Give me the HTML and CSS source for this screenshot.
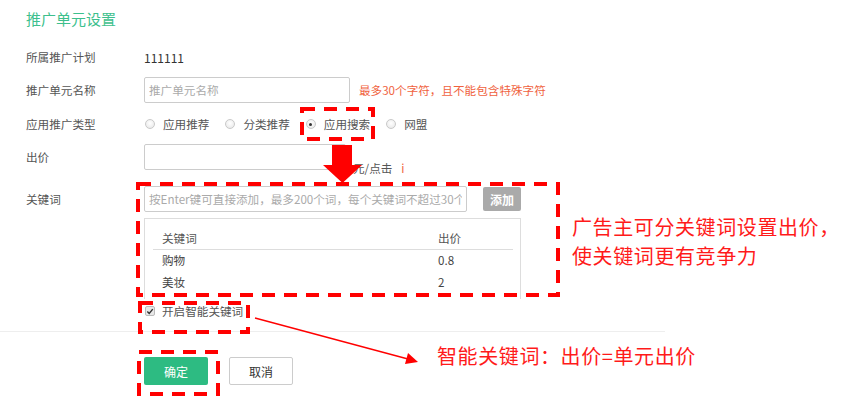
FILE: index.html
```html
<!DOCTYPE html>
<html lang="zh-CN">
<head>
    <meta charset="UTF-8">
    <meta name="viewport" content="width=device-width, initial-scale=1.0">
    <title>推广单元设置</title>

    <link rel="stylesheet" href="styles.css">
</head>
<body>

    <div class="page">
        <h2 class="title">推广单元设置</h2>

        <div class="form">
            <div class="row row-plan">
                <span class="label">所属推广计划</span>
                <span class="value">111111</span>
            </div>

            <div class="row row-name">
                <span class="label">推广单元名称</span>
                <div class="field">
                    <input type="text" class="input input-name" placeholder="推广单元名称">
                    <span class="hint">最多30个字符，且不能包含特殊字符</span>
                </div>
            </div>

            <div class="row row-type">
                <span class="label">应用推广类型</span>
                <div class="field radios">
                    <label class="radio-item"><span class="radio"></span>应用推荐</label>
                    <label class="radio-item"><span class="radio"></span>分类推荐</label>
                    <label class="radio-item"><span class="radio checked"></span>应用搜索</label>
                    <label class="radio-item"><span class="radio"></span>网盟</label>
                </div>
            </div>

            <div class="row row-price">
                <span class="label">出价</span>
                <div class="field price-field">
                    <input type="text" class="input input-price">
                    <span class="unit">元/点击</span>
                    <span class="info">i</span>
                </div>
            </div>

            <div class="row row-keyword">
                <span class="label">关键词</span>
                <div class="keyword-col">
                    <div class="keyword-add">
                        <input type="text" class="input input-keyword" placeholder="按Enter键可直接添加，最多200个词，每个关键词不超过30个字符">
                        <button class="btn-add">添加</button>
                    </div>
                    <div class="keyword-box">
                        <table class="keyword-table">
                            <thead>
                                <tr><th>关键词</th><th class="col-price">出价</th></tr>
                            </thead>
                            <tbody>
                                <tr><td>购物</td><td class="col-price">0.8</td></tr>
                                <tr><td>美妆</td><td class="col-price">2</td></tr>
                            </tbody>
                        </table>
                    </div>
                    <label class="smart">
                        <span class="checkbox">
                            <svg width="9" height="9" viewBox="0 0 9 9"><path d="M1.5 4.6 L3.6 6.8 L7.6 1.8" fill="none" stroke="#333" stroke-width="1.6"/></svg>
                        </span>
                        开启智能关键词
                    </label>
                </div>
            </div>
        </div>

        <div class="footer">
            <button class="btn btn-ok">确定</button>
            <button class="btn btn-cancel">取消</button>
        </div>

        <!-- annotations drawn over the form -->
        <svg class="marks" width="866" height="402" viewBox="0 0 866 402">
            <g fill="none" stroke="#ff0000" stroke-width="4" stroke-dasharray="13 9">
                <rect x="302" y="109" width="71" height="30"/>
                <rect x="138" y="184" width="420" height="111"/>
                <rect x="140" y="303" width="108" height="29"/>
                <rect x="139" y="352" width="79" height="42"/>
            </g>
            <polygon points="332,145 352,145 352,165 362,165 342.5,183 323,165 332,165" fill="#ff0000"/>
            <line x1="255" y1="318" x2="408" y2="359" stroke="#ff0000" stroke-width="1.3"/>
            <polygon points="418,362 405,364 408,353" fill="#ff0000"/>
        </svg>
        <div class="note note-price">
            <p>广告主可分关键词设置出价，</p>
            <p>使关键词更有竞争力</p>
        </div>
        <p class="note note-smart">智能关键词：出价=单元出价</p>
    </div>

</body>
</html>
```

FILE: styles.css
```css
* {
    margin: 0;
    padding: 0;
    box-sizing: border-box;
}

body {
    background-color: #fff;
    font-family: "Noto Sans CJK SC", "Noto Sans", sans-serif;
    font-size: 11.6px;
    color: #555;
}

.page {
    position: relative;
    width: 866px;
    height: 402px;
    overflow: hidden;
}

.title {
    font-size: 15px;
    font-weight: normal;
    color: #3dbf8d;
    padding: 8px 0 0 26px;
    line-height: 22px;
}

.form {
    padding: 14px 0 0 26px;
}

.row {
    display: flex;
    align-items: center;
    height: 26px;
}

.label {
    width: 118px;
    flex-shrink: 0;
    color: #555;
}

.row-name { margin-top: 7px; }
.row-type { margin-top: 8px; }
.row-price { margin-top: 7px; }
.row-keyword {
    margin-top: 16px;
    height: auto;
    align-items: flex-start;
}
.row-keyword .label {
    line-height: 26px;
}

.value {
    color: #333;
    font-size: 12px;
}

.field {
    display: flex;
    align-items: center;
}

.input {
    height: 26px;
    border: 1px solid #ccc;
    border-radius: 2px;
    padding: 0 4px;
    font-family: inherit;
    font-size: 11.6px;
    color: #333;
    outline: none;
}

.input::placeholder {
    color: #aaa;
}

.input-name {
    width: 206px;
}

.hint {
    color: #f0623e;
    margin-left: 9px;
}

.radio-item {
    display: flex;
    align-items: center;
    color: #555;
    margin-right: 15px;
}

.radio {
    width: 10px;
    height: 10px;
    border-radius: 50%;
    border: 1px solid #c9c9c9;
    background: radial-gradient(circle at 50% 40%, #fff 0, #ededed 70%, #dcdcdc 100%);
    margin: 0 8px 0 1px;
    position: relative;
}

.radio.checked::after {
    content: "";
    position: absolute;
    left: 2.5px;
    top: 2.5px;
    width: 3px;
    height: 3px;
    border-radius: 50%;
    background-color: #333;
}

.price-field {
    align-items: flex-end;
}

.input-price {
    width: 202px;
}

.unit {
    margin-left: 7px;
    line-height: 16px;
    margin-bottom: -6px;
}

.info {
    color: #f0623e;
    margin-left: 9px;
    line-height: 16px;
    margin-bottom: -6px;
}

.keyword-col {
    display: flex;
    flex-direction: column;
}

.keyword-add {
    display: flex;
    align-items: center;
}

.input-keyword {
    width: 323px;
}

.btn-add {
    margin-left: 16px;
    width: 38px;
    height: 24px;
    border: none;
    border-radius: 2px;
    background-color: #aaa;
    color: #fff;
    font-family: inherit;
    font-size: 12px;
    font-weight: bold;
}

.keyword-box {
    margin-top: 6px;
    width: 377px;
    height: 81px;
    border: 1px solid #ddd;
    border-bottom: none;
    padding: 9px 7px 0 8px;
}

.keyword-table {
    width: 100%;
    border-collapse: collapse;
}

.keyword-table th,
.keyword-table td {
    text-align: left;
    font-weight: normal;
    color: #555;
    padding-left: 9px;
    height: 22px;
}

.keyword-table th {
    border-bottom: 1px solid #ddd;
    height: 21px;
}

.keyword-table td {
    color: #444;
}

.col-price {
    width: 84px;
}

.smart {
    display: flex;
    align-items: center;
    margin-top: 4px;
    height: 16px;
    color: #555;
}

.checkbox {
    width: 10px;
    height: 10px;
    border: 1px solid #bbb;
    border-radius: 2px;
    background-color: #e8e8e8;
    margin: 0 7px 0 1px;
    display: flex;
    align-items: center;
    justify-content: center;
}

.footer {
    margin-top: 12px;
    width: 665px;
    border-top: 1px solid #eee;
    padding: 25px 0 0 144px;
    display: flex;
    gap: 21px;
}

.btn {
    width: 64px;
    height: 28px;
    border-radius: 2px;
    font-family: inherit;
    font-size: 12px;
}

.btn-ok {
    border: none;
    background-color: #2dbb82;
    color: #fff;
}

.btn-cancel {
    border: 1px solid #ccc;
    background-color: #fff;
    color: #333;
}

.marks {
    position: absolute;
    left: 0;
    top: 0;
    pointer-events: none;
}

.note {
    position: absolute;
    color: #ff1a1a;
    font-size: 20px;
    letter-spacing: 0.6px;
    line-height: 29px;
}

.note-price {
    left: 572px;
    top: 212px;
}

.note-smart {
    left: 437px;
    top: 341px;
}
```
